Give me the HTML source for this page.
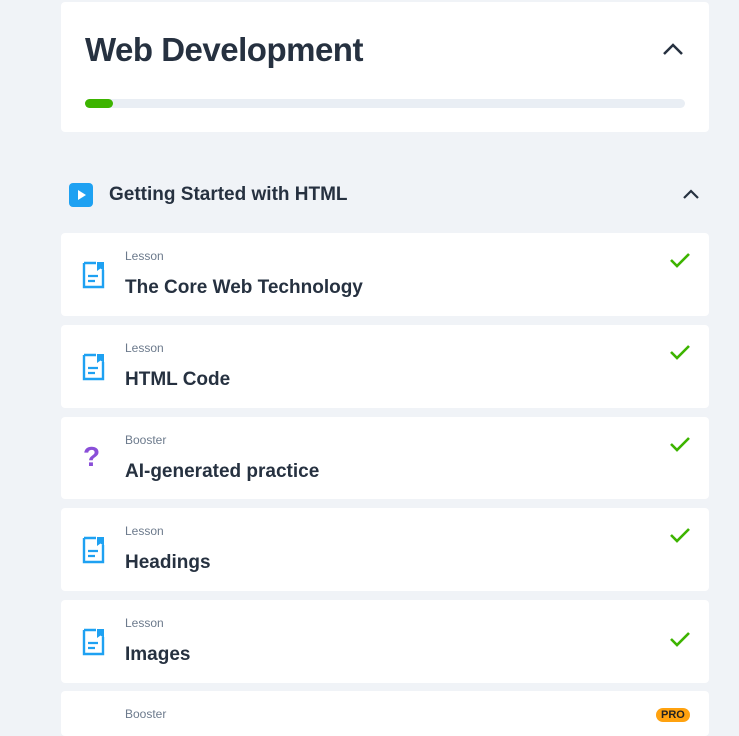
<!DOCTYPE html>
<html style="overflow:hidden;height:736px"><head><style>
body{margin:0;background:#f0f3f7;font-family:"Liberation Sans",sans-serif;width:739px;height:736px;overflow:hidden;position:relative;color:#263140}
.card{position:absolute;left:61px;width:648px;background:#fff;border-radius:4px}
.top{top:2px;height:130px}
.top h1{position:absolute;left:24px;top:29px;margin:0;font-size:33px;font-weight:bold;letter-spacing:-0.5px}
.bar{position:absolute;left:24px;top:97px;width:600px;height:9px;border-radius:5px;background:#e9eef4}
.bar i{position:absolute;left:0;top:0;width:28px;height:9px;border-radius:5px;background:#3db400}
.sec{position:absolute;left:69px;top:183px;width:24px;height:24px;border-radius:4px;background:#1ea1f2}
.sect{position:absolute;left:109px;top:184px;font-size:19px;font-weight:bold}
.l{height:83px}
.lab{position:absolute;left:64px;top:16px;font-size:12px;color:#6c7a8c}
.tt{position:absolute;left:64px;top:44px;font-size:19px;font-weight:bold}
.ic{position:absolute;left:21px;top:28px}
.ck{position:absolute;left:608px;top:18px}
.pro{position:absolute;left:595px;top:17px;background:#ffa20f;border-radius:8px;font-size:11px;font-weight:bold;padding:1px 5px;color:#222}
</style></head><body>
<div class="card top"><h1>Web Development</h1>
<svg style="position:absolute;left:601px;top:40px" width="22" height="14"><path d="M2 12 L11 3 L20 12" fill="none" stroke="#263140" stroke-width="2.5"/></svg>
<div class="bar"><i></i></div></div>
<div class="sec"><svg width="24" height="24"><path d="M9 7 L17 12 L9 17Z" fill="#fff"/></svg></div>
<div class="sect">Getting Started with HTML</div>
<svg style="position:absolute;left:682px;top:188px" width="18" height="12"><path d="M2 10 L9 3 L16 10" fill="none" stroke="#263140" stroke-width="2.2"/></svg>

<div class="card l" style="top:233px"><svg class="ic" width="24" height="28"><path d="M2 2 H14 M21 9 V26 H2 V2" fill="none" stroke="#1ea1f2" stroke-width="2.4"/><path d="M15 1 H22 V10 L18.5 7.5 L15 10Z" fill="#1ea1f2"/><path d="M6 15 H16 M6 20 H13" stroke="#1ea1f2" stroke-width="2.2"/></svg><div class="lab">Lesson</div><div class="tt">The Core Web Technology</div><svg class="ck" width="22" height="18"><path d="M2 9 L8 15 L20 3" fill="none" stroke="#3db400" stroke-width="2.6"/></svg></div>

<div class="card l" style="top:325px"><svg class="ic" width="24" height="28"><path d="M2 2 H14 M21 9 V26 H2 V2" fill="none" stroke="#1ea1f2" stroke-width="2.4"/><path d="M15 1 H22 V10 L18.5 7.5 L15 10Z" fill="#1ea1f2"/><path d="M6 15 H16 M6 20 H13" stroke="#1ea1f2" stroke-width="2.2"/></svg><div class="lab">Lesson</div><div class="tt">HTML Code</div><svg class="ck" width="22" height="18"><path d="M2 9 L8 15 L20 3" fill="none" stroke="#3db400" stroke-width="2.6"/></svg></div>

<div class="card l" style="top:417px;height:82px"><div style="position:absolute;left:22px;top:24px;font-size:28px;font-weight:bold;color:#8a4fd8">?</div><div class="lab">Booster</div><div class="tt">AI-generated practice</div><svg class="ck" width="22" height="18"><path d="M2 9 L8 15 L20 3" fill="none" stroke="#3db400" stroke-width="2.6"/></svg></div>

<div class="card l" style="top:508px"><svg class="ic" width="24" height="28"><path d="M2 2 H14 M21 9 V26 H2 V2" fill="none" stroke="#1ea1f2" stroke-width="2.4"/><path d="M15 1 H22 V10 L18.5 7.5 L15 10Z" fill="#1ea1f2"/><path d="M6 15 H16 M6 20 H13" stroke="#1ea1f2" stroke-width="2.2"/></svg><div class="lab">Lesson</div><div class="tt">Headings</div><svg class="ck" width="22" height="18"><path d="M2 9 L8 15 L20 3" fill="none" stroke="#3db400" stroke-width="2.6"/></svg></div>

<div class="card l" style="top:600px"><svg class="ic" width="24" height="28"><path d="M2 2 H14 M21 9 V26 H2 V2" fill="none" stroke="#1ea1f2" stroke-width="2.4"/><path d="M15 1 H22 V10 L18.5 7.5 L15 10Z" fill="#1ea1f2"/><path d="M6 15 H16 M6 20 H13" stroke="#1ea1f2" stroke-width="2.2"/></svg><div class="lab">Lesson</div><div class="tt">Images</div><svg class="ck" style="top:30px" width="22" height="18"><path d="M2 9 L8 15 L20 3" fill="none" stroke="#3db400" stroke-width="2.6"/></svg></div>

<div class="card l" style="top:691px;height:45px"><div class="lab">Booster</div><div class="pro">PRO</div></div>
</body></html>
